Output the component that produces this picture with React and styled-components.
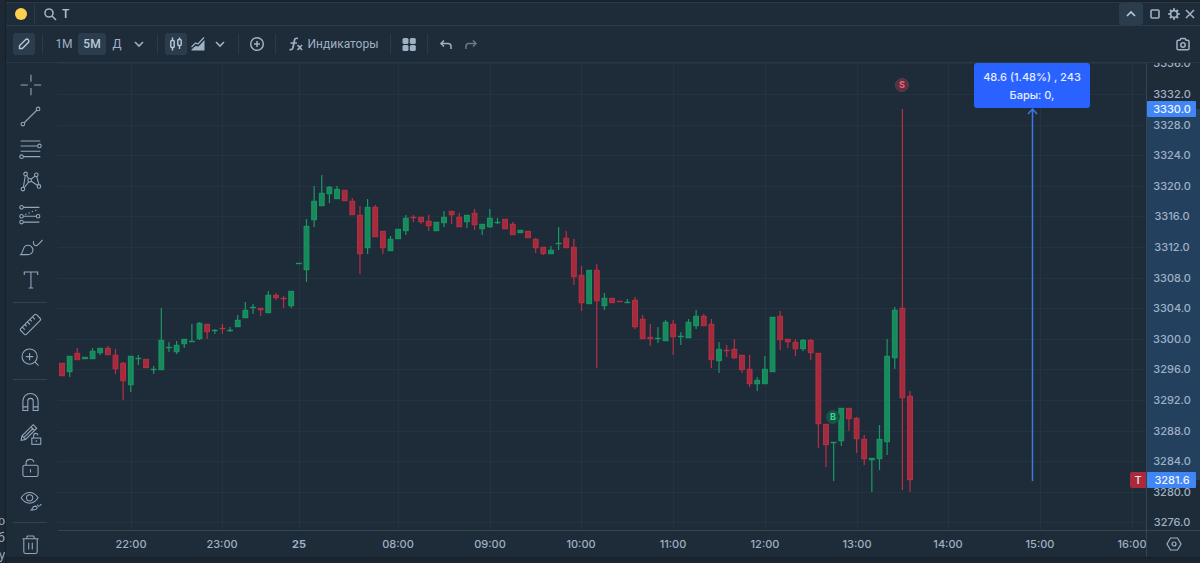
import React from "react";
import styled, { createGlobalStyle } from "styled-components";

const GlobalStyle = createGlobalStyle`
    * {
        box-sizing: border-box;
    }

    body {
        margin: 0;
        background: #1a2531;
        color: #9fb1c5;
        font-family: Inter, "Noto Sans", sans-serif;
        font-size: 11px;
    }
    `;

const Page = styled.div`
    display: flex;
    height: 100vh;
    min-height: 563px;
    padding-bottom: 5px;
    overflow: hidden;
    `;

const Sliver = styled.div`
    display: flex;
    flex-direction: column;
    justify-content: flex-end;
    flex: 0 0 6px;
    margin-bottom: -5px;
    overflow: hidden;
    background: #1c2834;
    border-right: 1px solid #15202a;
    font-family: "Noto Sans", sans-serif;
    font-size: 12px;
    line-height: 17px;
    direction: rtl;
    white-space: nowrap;
    `;

const Window = styled.main`
    display: flex;
    flex-direction: column;
    flex: 1;
    min-width: 0;
    background: #1e2b38;
    border-top: 2px solid #18232e;
    border-bottom: 1px solid #15202a;
    `;

const TitleBar = styled.header`
    display: flex;
    align-items: center;
    flex: 0 0 24px;
    padding: 0 1px 0 9px;
    border-top: 1px solid #293947;
    border-bottom: 1px solid #2b3b49;
    `;

const GroupDot = styled.button`
    width: 12px;
    height: 12px;
    padding: 0;
    border: 0;
    border-radius: 50%;
    background: #fdd14f;
    `;

const SearchLabel = styled.label`
    display: flex;
    align-items: center;
    gap: 4px;
    flex: 1;
    `;

const SearchInput = styled.input`
    width: 120px;
    padding: 0;
    border: 0;
    outline: 0;
    background: transparent;
    color: #b4c3d3;
    font-family: Roboto, sans-serif;
    font-size: 12px;
    font-weight: 500;
    `;

const Toolbar = styled.div`
    display: flex;
    align-items: center;
    flex: 0 0 37px;
    padding: 0 6px 0 7px;
    border-bottom: 1px solid #293846;
    `;

const Divider = styled.span`
    flex: 0 0 1px;
    height: 20px;
    margin: 0 7px;
    background: #2a3a48;
    `;

const BarButton = styled.button`
    display: flex;
    align-items: center;
    justify-content: center;
    flex: 0 0 auto;
    gap: 4px;
    width: ${(p) => p.$width || 22}px;
    height: 22px;
    padding: 0;
    border: 0;
    border-radius: 3px;
    background: ${(p) => (p.$active ? "#2b3d4c" : "transparent")};
    color: ${(p) => (p.$active ? "#b9c9da" : p.$dim ? "#64788b" : "#9fb1c5")};
    font-family: Roboto, sans-serif;
    font-size: 12px;
    font-weight: ${(p) => (p.$active ? 500 : 400)};
    `;

const Spacer = styled.span`
    flex: 1;
    `;

const Body = styled.div`
    display: flex;
    flex: 1;
    min-height: 0;
    `;

const ToolColumn = styled.nav`
    display: flex;
    flex-direction: column;
    align-items: center;
    flex: 0 0 52px;
    padding: 5px 4px 0 0;
    `;

const ToolGroup = styled.div`
    display: flex;
    flex-direction: column;
    justify-content: space-between;
    flex-shrink: 0;
    height: ${(p) => p.$height}px;
    `;

const ToolButton = styled.button`
    display: flex;
    align-items: center;
    justify-content: center;
    width: 34px;
    height: 32px;
    padding: 0;
    border: 0;
    background: transparent;
    color: #93a8bd;
    `;

const ToolRule = styled.span`
    flex: 0 0 1px;
    width: 34px;
    margin: 6px 0 5px;
    background: #314352;
    `;

const ChartArea = styled.div`
    display: grid;
    grid-template-columns: minmax(0, 1fr) 54px;
    grid-template-rows: minmax(0, 1fr) 27px;
    flex: 1;
    min-width: 0;
    `;

const Pane = styled.div`
    position: relative;
    min-height: 0;
    overflow: hidden;
    `;

const Plot = styled.svg`
    display: block;
    width: 100%;
    height: 100%;
    `;

const PriceScale = styled.div`
    min-height: 0;
    border-left: 1px solid #344451;
    `;

const TimeScale = styled.div`
    border-top: 1px solid #344451;
    `;

const Corner = styled.div`
    display: flex;
    align-items: center;
    justify-content: center;
    border-top: 1px solid #344451;
    border-left: 1px solid #344451;
    `;

const Measure = styled.div`
    position: absolute;
    top: 0;
    left: 916px;
    width: 116px;
    padding: 5px 0 4px;
    border-radius: 3px;
    background: #2962ff;
    color: #e6edff;
    font-size: 11px;
    font-weight: 500;
    line-height: 18px;
    text-align: center;
    `;

const TickerTag = styled.span`
    position: absolute;
    top: 409px;
    left: 1072px;
    width: 16px;
    border-radius: 2px 0 0 2px;
    background: #a82a3b;
    color: #f3dfe3;
    font-size: 11px;
    font-weight: 500;
    line-height: 16px;
    text-align: center;
    `;

/* side, body top, body bottom, high, low - one candle per five minutes */
const candles = [
    ["r", 363, 376], ["g", 356, 372, 356, 377], ["r", 353, 360, 348], ["g", 357, 359],
    ["g", 351, 359, 348], ["g", 348, 353, 348, 355], ["r", 348, 355, 346], ["r", 355, 369, 349, 374],
    ["r", 363, 381, 362, 400], ["g", 356, 385, 356, 392], ["g", 358, 359, 355, 365], ["r", 359, 368],
    ["g", 369, 370, 366, 374], ["g", 340, 370, 308], ["g", 347, 348, 342, 352], ["g", 345, 352, 341, 354],
    ["g", 339, 344, 339, 348], ["g", 341, 342, 324], ["g", 323, 339, 322, 340], ["r", 324, 332, 324, 339],
    ["g", 330, 331, 329, 334], ["r", 328, 329, 324, 334], ["g", 330, 331, 327, 332], ["g", 320, 327, 315],
    ["g", 310, 318, 302], ["g", 307, 308, 304, 314], ["r", 308, 310, 308, 316], ["g", 295, 313, 291],
    ["r", 295, 298, 293, 300], ["r", 298, 299, 296, 308], ["g", 291, 306, 291, 308], ["g", 263, 264],
    ["g", 226, 270, 219, 282], ["g", 201, 220, 186, 227], ["g", 193, 206, 175], ["g", 187, 194, 186, 203],
    ["g", 189, 199, 186], ["r", 190, 201], ["r", 201, 215, 198], ["r", 215, 254, 206, 274],
    ["g", 207, 248, 199, 254], ["r", 207, 237, 205], ["r", 231, 248, 231, 254], ["g", 239, 251, 236],
    ["g", 229, 239], ["g", 218, 231, 215, 235], ["r", 217, 218, 215, 222], ["r", 217, 222, 217, 224],
    ["r", 221, 226, 215, 231], ["g", 222, 231], ["g", 217, 223, 211, 227], ["r", 211, 215, 211, 224],
    ["r", 217, 227, 213], ["g", 215, 222, 215, 228], ["r", 213, 225, 209, 230], ["g", 224, 229, 224, 235],
    ["g", 218, 227, 209, 228], ["g", 222, 223, 218, 224], ["r", 219, 229], ["r", 224, 235, 222],
    ["g", 230, 233], ["r", 231, 238], ["r", 239, 248, 238, 253], ["r", 247, 254, 247, 255],
    ["g", 250, 254, 246], ["g", 243, 244, 227, 250], ["r", 238, 248, 231], ["r", 247, 277, 239, 285],
    ["r", 275, 303, 266, 311], ["g", 270, 304], ["r", 270, 301, 264, 368], ["g", 298, 306, 293, 310],
    ["r", 298, 303], ["r", 301, 302], ["g", 302, 303, 299], ["r", 300, 327, 297, 329],
    ["r", 319, 339, 315], ["r", 337, 339, 324, 346], ["g", 338, 339, 327, 343], ["g", 322, 341, 320],
    ["r", 324, 337, 320, 355], ["g", 336, 337, 332, 345], ["g", 322, 338, 319], ["g", 316, 326, 310, 329],
    ["r", 316, 326, 314], ["r", 324, 360, 319, 368], ["g", 349, 361, 342, 373], ["r", 350, 351, 345, 357],
    ["r", 349, 358, 339, 359], ["r", 355, 370, 355, 373], ["r", 369, 384, 355, 387], ["g", 380, 384, 377, 391],
    ["g", 369, 384, 356], ["g", 317, 372], ["r", 316, 340, 311, 350], ["r", 339, 342, 339, 348],
    ["r", 342, 349, 339, 356], ["g", 340, 349, 339, 351], ["r", 340, 353, 339, 360], ["r", 353, 424, 353, 448],
    ["r", 424, 445, 424, 467], ["g", 442, 443, 442, 481], ["g", 408, 441, 408, 446], ["r", 408, 419, 408, 431],
    ["r", 418, 439, 417, 453], ["r", 439, 459, 435, 465], ["g", 458, 460, 458, 492], ["g", 439, 459, 425, 470],
    ["g", 356, 442, 339, 455], ["g", 310, 358, 307, 369], ["r", 308, 398, 109, 490], ["r", 396, 480, 391, 492],
];

const times = [
    [131, "22:00"], [222, "23:00"], [299, "25"], [398, "08:00"], [490, "09:00"], [581, "10:00"],
    [673, "11:00"], [765, "12:00"], [857, "13:00"], [948, "14:00"], [1040, "15:00"], [1132, "16:00"],
];

const prices = Array.from({ length: 16 }, (_, i) => ({
    label: (3336 - i * 4).toFixed(1),
    y: Math.round(0.4 + i * 30.6),
}));

const candleColors = {
    g: { fill: "#168a5b", stroke: "#1b9866" },
    r: { fill: "#a42b3c", stroke: "#ba3045" },
};

function Candle({ index, data }) {
    const [side, top, bottom, high = top, low = bottom] = data;
    const { fill, stroke } = candleColors[side];
    const x = 62 + index * 7.64;
    return (
        <g>
            <line x1={x} x2={x} y1={high} y2={low} stroke={stroke} strokeWidth="1.2" />
            <rect x={x - 2.4} y={top + 0.3} width="4.8" height={Math.max(bottom - top - 0.6, 0.3)} fill={fill} stroke={stroke} />
        </g>
    );
}

function Marker({ x, y, letter, color, ring, fill }) {
    return (
        <g>
            <circle cx={x} cy={y} r="6.5" fill={fill} stroke={ring} />
            <text x={x} y={y + 3} fill={color} fontSize="9" fontWeight="700" textAnchor="middle">{letter}</text>
        </g>
    );
}

function Chart() {
    return (
        <Plot role="img" aria-label="T, 5M">
            {prices.map((p) => (
                <line key={p.label} x1="0" x2="100%" y1={p.y + 0.5} y2={p.y + 0.5} stroke="#243340" />
            ))}
            {times.map(([x, label]) => (
                <line key={label} x1={x - 57.5} x2={x - 57.5} y1="0" y2="100%" stroke="#243340" />
            ))}
            <g transform="translate(-58 -63)">
                {candles.map((c, i) => (
                    <Candle key={i} index={i} data={c} />
                ))}
                <Marker x={902} y={85} letter="S" color="#f2647a" ring="#55404c" fill="#5e2f3d" />
                <Marker x={833} y={417} letter="B" color="#3fd694" ring="#1d5048" fill="#155443" />
                <path d="M1032.500 481V109M1028 114l4.500-5 4.500 5" fill="none" stroke="#3d78e0" strokeWidth="1.500" />
            </g>
        </Plot>
    );
}

function Prices() {
    return (
        <Plot fill="#9fb1c5" fontSize="11" fontWeight="500" textAnchor="middle">
            <rect x="0" y="46" width="100%" height="371" fill="#24405f" />
            {prices.map((p) => (
                <text key={p.label} x="25" y={p.y + 4}>{p.label}</text>
            ))}
            <rect x="0" y="38" width="49" height="16" rx="1" fill="#4086f4" />
            <rect x="0" y="409" width="49" height="16" rx="1" fill="#4086f4" />
            <g fill="#f0f5ff">
                <text x="25" y="50">3330.0</text>
                <text x="25" y="421">3281.6</text>
            </g>
        </Plot>
    );
}

function Times() {
    return (
        <Plot fill="#9fb1c5" fontSize="11" textAnchor="middle">
            {times.map(([x, label]) => (
                <text key={label} x={x - 58} y="17" fontWeight={label === "25" ? 700 : 500}>{label}</text>
            ))}
        </Plot>
    );
}

function Icon({ size = 16, box = size, width = 1.5, children }) {
    return (
        <svg width={size} height={size} viewBox={`0 0 ${box} ${box}`} fill="none" stroke="currentColor" strokeWidth={width} aria-hidden="true">
            {children}
        </svg>
    );
}

const Chevron = () => <Icon width={1.6}><path d="M4 6l4 4 4-4" /></Icon>;

const drawTools = [
    ["Перекрестие", <path d="M14.500 3v8M14.500 18v8M3 14.500h8M18 14.500h8" />],
    ["Линия тренда", <><path d="M7 21L21 7" /><circle cx="22.500" cy="5.500" r="2" /><circle cx="5.500" cy="22.500" r="2" /></>],
    ["Уровни Фибоначчи", <><path d="M3 4.500h22M3 10h19M3 16h22M6 22h19" /><circle cx="24" cy="10" r="2" /><circle cx="4" cy="22" r="2" /></>],
    ["Паттерны", <>
        <path d="M8.200 7.500L6 20.500M9.500 7l2.500 4M14.500 11.500l4.500-3.500M7 21l5-6.500M14.500 13.500l7.500 5M21 8.500l2.500 9" />
        <circle cx="8.500" cy="5.500" r="2" /><circle cx="20.500" cy="6.500" r="2" /><circle cx="5.500" cy="22.500" r="2" />
        <circle cx="23.500" cy="19.500" r="2" /><circle cx="13" cy="12.700" r="2" />
    </>],
    ["Прогнозирование", <>
        <path d="M6 6h18M6 16h14.500M6 22.500h18" /><path d="M8 14L23 8" strokeDasharray="1.500 2.500" />
        <circle cx="4" cy="6" r="2" /><circle cx="4" cy="16" r="2" /><circle cx="22.500" cy="16" r="2" /><circle cx="4" cy="22.500" r="2" />
    </>],
    ["Кисть", <><path d="M3 22c3-2.500 2-7 5-9.500 2.500-2 6-1 7.500 1s1.500 5-.5 7c-1.500 1.500-3 1.500-5 1.500z" /><path d="M17.500 7c-.8 2.500.5 5 2.500 5S25 8.500 27.500 5.500" /></>],
    ["Текст", <path d="M7 9V5.500h15V9M14.500 5.500v18M12 23.500h5" />],
];

const measureTools = [
    ["Линейка", <g transform="rotate(-45 14 14)"><rect x="1.500" y="9.500" width="25" height="9" rx="1.500" /><path d="M5.500 9.500v4M9.500 9.500v3M13.500 9.500v4M17.500 9.500v3M21.500 9.500v4" /></g>],
    ["Увеличить", <><circle cx="13" cy="13" r="8.500" /><path d="M19 19l4 4M13 9v8M9 13h8" /></>],
];

const lockTools = [
    ["Магнит", <><path d="M5.500 24V13.500a8.500 8.500 0 0 1 17 0V24h-5.500V13.500a3 3 0 0 0-6 0V24z" /><path d="M5.500 20H11M17 20h5.500" /></>],
    ["Режим рисования", <>
        <path d="M3.500 20.500l1-5L17 3l4 4L8.500 19.500zM4.500 15.500l4 4M14.500 5.500l4 4M6.500 17.500L17 7" />
        <rect x="15.500" y="18" width="10" height="7" fill="#1e2b38" /><path d="M17.500 18v-2.500a2.500 2.500 0 0 1 5-.5M20.500 20.500v2" />
    </>],
    ["Заблокировать", <><rect x="5.500" y="11.500" width="17" height="12.500" rx="2" /><path d="M9 11.500V9.500a4.500 4.500 0 0 1 8.800-1.500M14 16v3.500" /></>],
    ["Скрыть", <>
        <path d="M3.500 11C6 7 9.500 5 13 5s7 2 9.500 6c-2.500 4-6 6-9.500 6s-7-2-9.500-6z" /><circle cx="13" cy="11" r="3.500" />
        <path d="M15 24.500c1.500-1 1-4 4-4.200 2 0 3 1.700 1.800 3.200-1 1.200-3 1-5.800 1zM22 18.500c0 2 1 2.200 2.200 1.500l2-2" />
    </>],
];

function Tools({ items, height }) {
    return (
        <ToolGroup $height={height}>
            {items.map(([name, drawing]) => (
                <ToolButton key={name} type="button" aria-label={name}>
                    <Icon size={25} box={28} width={1.2}>{drawing}</Icon>
                </ToolButton>
            ))}
        </ToolGroup>
    );
}

function Title() {
    return (
        <TitleBar>
            <GroupDot type="button" aria-label="Группа" />
            <Divider />
            <SearchLabel>
                <Icon width={1.6}><circle cx="7" cy="7" r="4" /><path d="M10 10l4 4" /></Icon>
                <SearchInput aria-label="Поиск инструмента" defaultValue="T" />
            </SearchLabel>
            <BarButton type="button" $active $width={24} aria-label="Свернуть"><Icon width={1.6}><path d="M4 10l4-4 4 4" /></Icon></BarButton>
            <BarButton type="button" $width={24} aria-label="Развернуть"><Icon width={1.6}><rect x="4" y="4" width="8" height="8" rx="1" /></Icon></BarButton>
            <BarButton type="button" $width={14} aria-label="Настройки">
                <Icon size={14} box={16} width={1.8}><circle cx="8" cy="8" r="3.800" /><path strokeWidth="2.400" d="M8 1.500v2.500M8 12v2.500M1.500 8H4M12 8h2.500M3.400 3.400l1.800 1.800M10.800 10.800l1.800 1.800M3.400 12.600l1.800-1.800M10.800 5.200l1.800-1.800" /></Icon>
            </BarButton>
            <BarButton type="button" $width={18} aria-label="Закрыть"><Icon width={1.6}><path d="M4 4l8 8M12 4l-8 8" /></Icon></BarButton>
        </TitleBar>
    );
}

function TopToolbar() {
    return (
        <Toolbar>
            <BarButton type="button" $active aria-label="Рисование">
                <Icon width={1.4}><path d="M3.500 12.500v-2.800l6.200-6.200c1.800-1.300 4 .9 2.800 2.800l-6.200 6.200z" /></Icon>
            </BarButton>
            <Divider />
            <BarButton type="button" $width={28}>1M</BarButton>
            <BarButton type="button" $width={28} $active>5M</BarButton>
            <BarButton type="button">Д</BarButton>
            <BarButton type="button" aria-label="Интервалы"><Chevron /></BarButton>
            <Divider />
            <BarButton type="button" $active aria-label="Свечи">
                <Icon width={1.4}><path d="M4.500 1.500v3M4.500 11.500v3M11.500 1.500v2M11.500 9.500v3.500" /><rect x="2.800" y="4.500" width="3.400" height="7" rx="1" /><rect x="9.800" y="3.500" width="3.400" height="6" rx="1" /></Icon>
            </BarButton>
            <BarButton type="button" aria-label="Область">
                <Icon width={1.2}><path d="M1.500 11L5.500 7l2.500 1 6-6.500" /><path d="M1.500 14.500v-1L5.500 10l3 .5L14.500 4v10.500z" fill="currentColor" stroke="none" /></Icon>
            </BarButton>
            <BarButton type="button" aria-label="Тип графика"><Chevron /></BarButton>
            <Divider />
            <BarButton type="button" aria-label="Сравнить"><Icon><circle cx="8" cy="8" r="6.300" /><path d="M8 5v6M5 8h6" /></Icon></BarButton>
            <Divider />
            <BarButton type="button" $width={100}>
                <Icon width={1.7}><path d="M10 2.500c-2.500-.8-3.300.5-3.700 2.500l-1.300 6.500c-.4 1.800-1.500 2.500-3.500 2M2.500 7H9M9.500 9l4.500 5M14 9l-4.500 5" /></Icon>
                Индикаторы
            </BarButton>
            <Divider />
            <BarButton type="button" aria-label="Шаблоны">
                <Icon><g fill="currentColor" stroke="none"><rect x="1.500" y="2" width="6" height="6" rx="1.500" /><rect x="8.800" y="2" width="6" height="6" rx="1.500" /><rect x="1.500" y="9" width="6" height="6" rx="1.500" /><rect x="8.800" y="9" width="6" height="6" rx="1.500" /></g></Icon>
            </BarButton>
            <Divider />
            <BarButton type="button" aria-label="Отменить"><Icon><path d="M6 4.500L3 7.500l3 3M3 7.500h7c2 0 3 1 3 3V13" /></Icon></BarButton>
            <BarButton type="button" $dim $width={28} aria-label="Вернуть"><Icon><path d="M10 4.500l3 3-3 3M13 7.500H6c-2 0-3 1-3 3V13" /></Icon></BarButton>
            <Spacer />
            <BarButton type="button" aria-label="Снимок"><Icon><path d="M2 5.500c0-.8.500-1.300 1.300-1.300h1.500L6 2.500h4l1.200 1.700h1.500c.8 0 1.300.5 1.300 1.300v7c0 .8-.5 1.300-1.300 1.300H3.300c-.8 0-1.300-.5-1.300-1.300z" /><circle cx="8" cy="9" r="2.200" /></Icon></BarButton>
        </Toolbar>
    );
}

function App() {
    return (
        <>
            <GlobalStyle />
            <Page>
                <Sliver>
                    <div>ю</div>
                    <div>б</div>
                    <div>у</div>
                </Sliver>
                <Window>
                    <Title />
                    <TopToolbar />
                    <Body>
                        <ToolColumn>
                            <Tools items={drawTools} height={228} />
                            <ToolRule />
                            <Tools items={measureTools} height={65} />
                            <ToolRule />
                            <Tools items={lockTools} height={131} />
                            <ToolRule />
                            <Tools
                                height={32}
                                items={[["Удалить", <path d="M5 7.500h18M10 7.500V5.500a1 1 0 0 1 1-1h6a1 1 0 0 1 1 1v2M6.500 7.500V22a2 2 0 0 0 2 2h11a2 2 0 0 0 2-2V7.500M12 12v7.500M16 12v7.500" />]]}
                            />
                        </ToolColumn>
                        <ChartArea>
                            <Pane>
                                <Chart />
                                <Measure>
                                    <div>48.6 (1.48%) , 243</div>
                                    <div>Бары: 0,</div>
                                </Measure>
                                <TickerTag>T</TickerTag>
                            </Pane>
                            <PriceScale><Prices /></PriceScale>
                            <TimeScale><Times /></TimeScale>
                            <Corner>
                                <Icon width={1.2}><path d="M4.500 2h7L15 8l-3.500 6h-7L1 8z" /><circle cx="8" cy="8" r="2" /></Icon>
                            </Corner>
                        </ChartArea>
                    </Body>
                </Window>
            </Page>
        </>
    );
}

export default App;
